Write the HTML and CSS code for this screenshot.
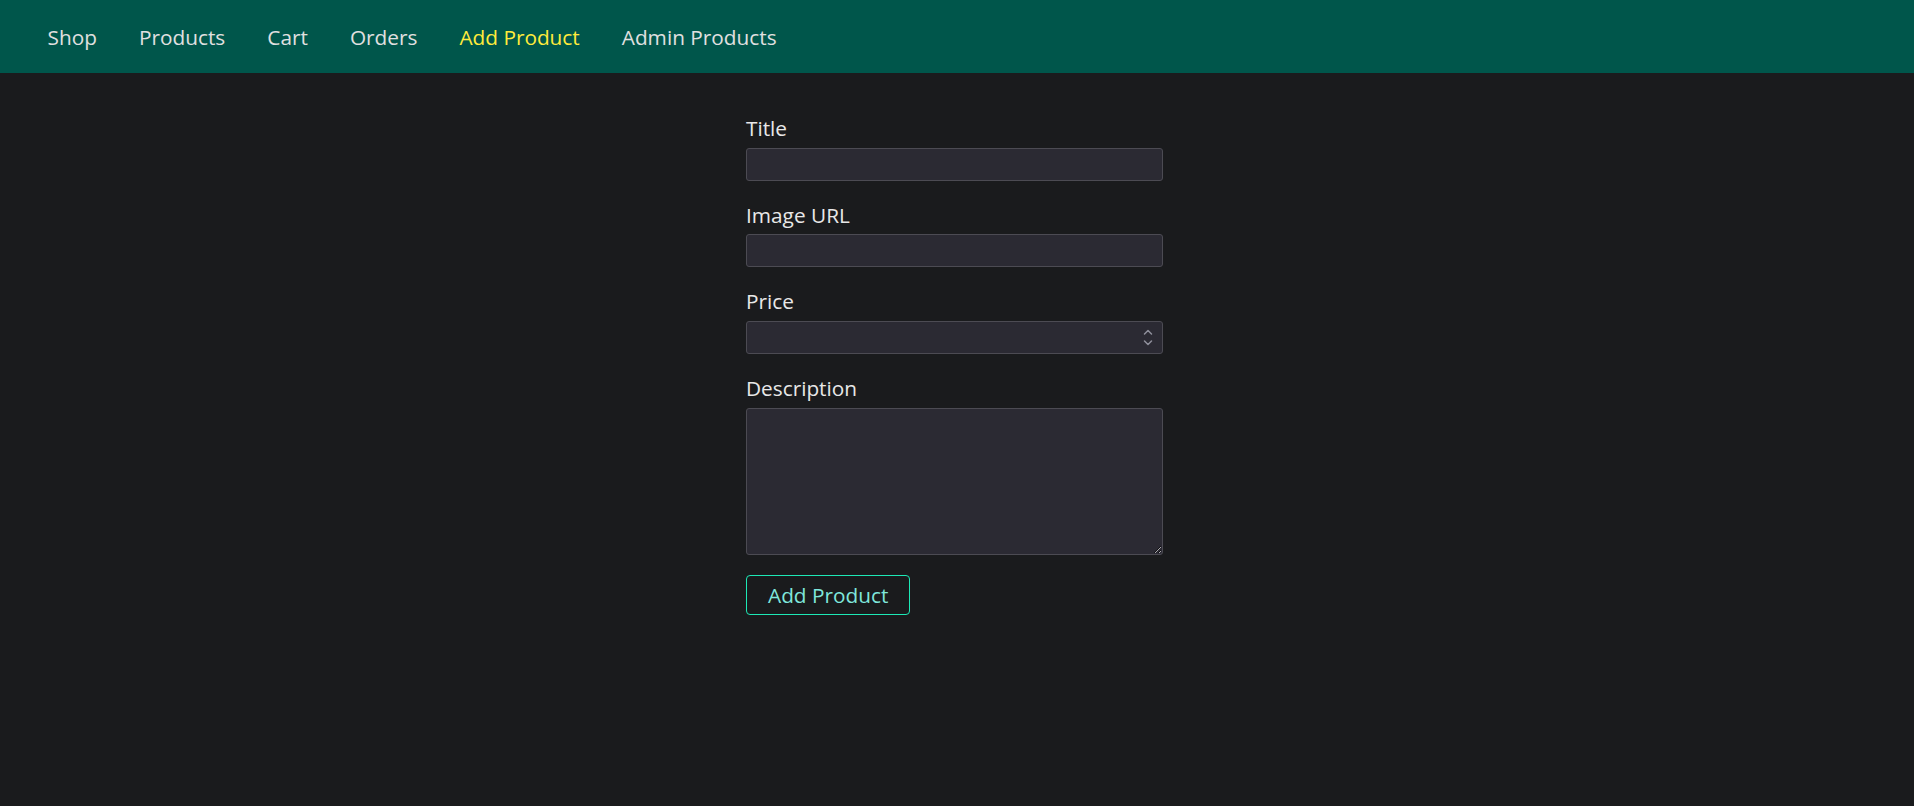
FILE: index.html
```html
<!DOCTYPE html>
<html lang="en">
<head>
<meta charset="utf-8">
<title>Add Product</title>
<link rel="stylesheet" href="styles.css">
</head>
<body>
<header class="main-header">
  <nav class="main-header__nav">
    <ul class="main-header__item-list">
      <li class="main-header__item"><a href="#">Shop</a></li>
      <li class="main-header__item"><a href="#">Products</a></li>
      <li class="main-header__item"><a href="#">Cart</a></li>
      <li class="main-header__item"><a href="#">Orders</a></li>
      <li class="main-header__item"><a class="active" href="#">Add Product</a></li>
      <li class="main-header__item"><a href="#">Admin Products</a></li>
    </ul>
  </nav>
</header>
<main>
  <form class="product-form">
    <div class="form-control">
      <label for="title">Title</label>
      <input type="text" name="title" id="title">
    </div>
    <div class="form-control">
      <label for="imageUrl">Image URL</label>
      <input type="text" name="imageUrl" id="imageUrl">
    </div>
    <div class="form-control">
      <label for="price">Price</label>
      <div class="number-field">
        <input type="number" name="price" id="price" step="0.01">
        <svg class="spinner" width="10" height="17" viewBox="0 0 10 17" aria-hidden="true">
          <path d="M1.5 5 L5 1.5 L8.5 5" fill="none" stroke="#8f8f9b" stroke-width="1.5" stroke-linecap="round" stroke-linejoin="round"/>
          <path d="M1.5 12 L5 15.5 L8.5 12" fill="none" stroke="#8f8f9b" stroke-width="1.5" stroke-linecap="round" stroke-linejoin="round"/>
        </svg>
      </div>
    </div>
    <div class="form-control">
      <label for="description">Description</label>
      <textarea name="description" id="description" rows="5"></textarea>
    </div>
    <button class="btn" type="submit">Add Product</button>
  </form>
</main>
</body>
</html>
```
FILE: styles.css
```css
* {
  box-sizing: border-box;
}

html {
  color-scheme: dark;
}

body {
  margin: 0;
  background: #1a1b1d;
  font-family: "Open Sans", "Noto Sans", sans-serif;
  font-size: 20.8px;
  color: #e6e6e6;
}

.main-header {
  height: 73px;
  background: #00564b;
  display: flex;
  align-items: center;
  padding: 0 0 0 47.6px;
}

.main-header__item-list {
  list-style: none;
  margin: 0;
  padding: 0;
  display: flex;
  gap: 42px;
}

.main-header__item a {
  text-decoration: none;
  color: #e0e0e0;
  line-height: 28px;
}

.main-header__item a.active {
  color: #ffeb3b;
}

.product-form {
  width: 417px;
  margin: 41px 0 0 calc(50% - 211px);
}

.form-control {
  margin-bottom: 20.2px;
}

.form-control label {
  display: block;
  line-height: 28px;
  margin-bottom: 5.5px;
  color: #e8e8e8;
}

.form-control input,
.form-control textarea {
  display: block;
  width: 100%;
  margin: 0;
  font: inherit;
  font-size: 16px;
  color: #e8e8e8;
  background: #2b2a33;
  border: 1.3px solid #4c4b53;
  border-radius: 3px;
  padding: 0 4px;
  outline: none;
}

.form-control input {
  height: 33px;
}

.number-field {
  position: relative;
}

.number-field input {
  padding-right: 28px;
  -moz-appearance: textfield;
  appearance: textfield;
}

.number-field input::-webkit-inner-spin-button,
.number-field input::-webkit-outer-spin-button {
  -webkit-appearance: none;
  margin: 0;
}

.spinner {
  position: absolute;
  right: 10px;
  top: 8px;
  pointer-events: none;
}

.form-control textarea {
  height: 147px;
  resize: vertical;
}

.btn {
  font: inherit;
  line-height: 28px;
  color: #7fe7dc;
  background: transparent;
  border: 1.3px solid #1de9b6;
  border-radius: 4px;
  padding: 5px 21px;
  cursor: pointer;
}
```
